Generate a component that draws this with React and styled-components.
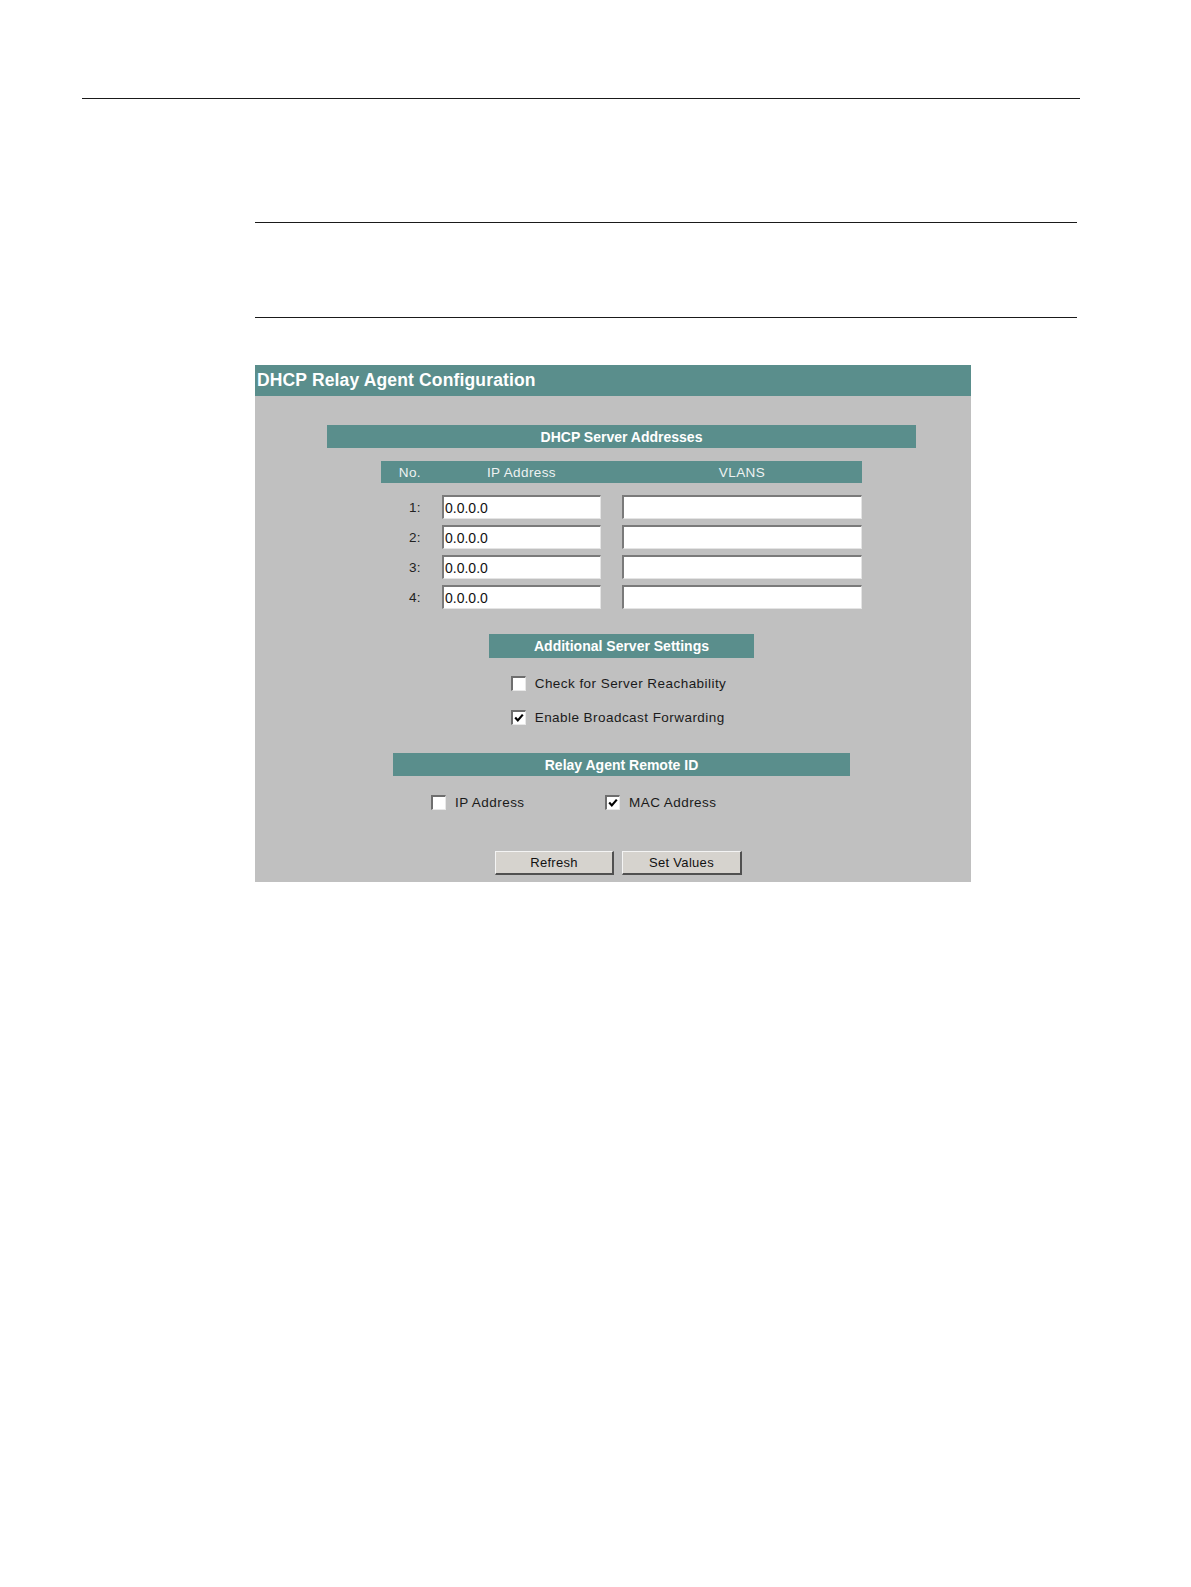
import React from "react";
import styled, { createGlobalStyle } from "styled-components";

const Global = createGlobalStyle`
  html, body { margin: 0; padding: 0; background: #ffffff; }
  body { font-family: "Liberation Sans", Arial, sans-serif; }
`;

const TEAL = "#5a8e8c";
const GRAY = "#c0c0c0";

const Page = styled.div`
  width: 1191px;
  min-height: 1587px;
  padding-top: 98px;
  box-sizing: border-box;
  background: #fff;
`;

const Rule = styled.div`
  height: 1px;
  background: #1a1a1a;
  margin-left: ${(p) => p.$left}px;
  width: ${(p) => p.$width}px;
  margin-top: ${(p) => p.$top || 0}px;
`;

const Content = styled.div`
  margin-left: 255px;
  width: 822px;
  display: flex;
  flex-direction: column;
`;

const Panel = styled.div`
  margin-top: 47px;
  width: 716px;
  background: ${GRAY};
  display: flex;
  flex-direction: column;
`;

const TitleBar = styled.div`
  height: 31px;
  background: ${TEAL};
  color: #fff;
  font-weight: bold;
  font-size: 17.5px;
  letter-spacing: 0.15px;
  display: flex;
  align-items: center;
  padding-left: 2px;
  padding-bottom: 1px;
  box-sizing: border-box;
`;

const Body = styled.div`
  display: flex;
  flex-direction: column;
  align-items: center;
  padding: 29px 0 7px 17px;
`;

const SectionBar = styled.div`
  width: ${(p) => p.$width}px;
  height: ${(p) => p.$height || 23}px;
  margin-top: ${(p) => p.$top || 0}px;
  background: ${TEAL};
  color: #fff;
  font-weight: bold;
  font-size: 14px;
  display: flex;
  align-items: center;
  justify-content: center;
`;

const Grid = styled.div`
  display: grid;
  grid-template-columns: 40px 159px 240px;
  column-gap: 21px;
  width: 481px;
  align-items: center;
`;

const HeaderGrid = styled(Grid)`
  margin-top: 13px;
  height: 22px;
  background: ${TEAL};
  color: #eef2f2;
  font-size: 13.5px;
  letter-spacing: 0.4px;
`;

const HeadCell = styled.div`
  text-align: ${(p) => (p.$right ? "right" : "center")};
`;

const Rows = styled(Grid)`
  margin-top: 12px;
  row-gap: 6px;
`;

const RowLabel = styled.div`
  text-align: right;
  font-size: 13.5px;
  letter-spacing: 0.4px;
  color: #222;
`;

const TextBox = styled.input`
  box-sizing: border-box;
  height: 24px;
  width: 100%;
  margin: 0;
  padding: 0 0 0 1px;
  background: #fff;
  border-style: solid;
  border-width: 2px 1px 1px 2px;
  border-color: #7a7a7a #e4e4e4 #e4e4e4 #7a7a7a;
  font-family: "Liberation Sans", Arial, sans-serif;
  font-size: 14px;
  color: #111;
  outline: none;
`;

const CheckGroup = styled.div`
  display: flex;
  flex-direction: column;
  align-items: flex-start;
  gap: 20px;
  margin-top: 18px;
  margin-right: 6px;
`;

const CheckItem = styled.label`
  display: flex;
  align-items: center;
  gap: 9px;
  font-size: 13.5px;
  letter-spacing: 0.45px;
  color: #1a1a1a;
  height: 14px;
`;

const Box = styled.span`
  box-sizing: border-box;
  width: 15px;
  height: 15px;
  background: #fff;
  border-style: solid;
  border-width: 2px 1px 1px 2px;
  border-color: #6e6e6e #e8e8e8 #e8e8e8 #6e6e6e;
  display: flex;
  align-items: center;
  justify-content: center;
  flex-shrink: 0;
`;

const RemoteRow = styled.div`
  width: 457px;
  box-sizing: border-box;
  padding-left: 38px;
  margin-top: 19px;
  display: grid;
  grid-template-columns: 174px auto;
`;

const ButtonRow = styled.div`
  display: flex;
  gap: 8px;
  margin-top: 42px;
  padding-right: 6px;
`;

const Button = styled.button`
  box-sizing: border-box;
  width: ${(p) => p.$width}px;
  height: 24px;
  margin: 0;
  padding: 0;
  background: #d6d3ce;
  border-style: solid;
  border-width: 1px 2px 2px 1px;
  border-color: #f4f4f4 #505050 #505050 #f4f4f4;
  font-family: "Liberation Sans", Arial, sans-serif;
  font-size: 13px;
  letter-spacing: 0.3px;
  color: #111;
`;

const Check = ({ checked }) => (
  <Box>
    {checked && (
      <svg width="10" height="10" viewBox="0 0 10 10">
        <path d="M1.2 4.6 L3.8 7.4 L8.8 1.6" fill="none" stroke="#000" strokeWidth="2.2" />
      </svg>
    )}
  </Box>
);

const rows = [1, 2, 3, 4];

export default function App() {
  return (
    <Page>
      <Global />
      <Rule $left={82} $width={998} />
      <Content>
        <Rule $left={0} $width={822} $top={123} />
        <Rule $left={0} $width={822} $top={94} />
        <Panel>
          <TitleBar>DHCP Relay Agent Configuration</TitleBar>
          <Body>
            <SectionBar $width={589}>DHCP Server Addresses</SectionBar>
            <HeaderGrid>
              <HeadCell $right>No.</HeadCell>
              <HeadCell>IP Address</HeadCell>
              <HeadCell>VLANS</HeadCell>
            </HeaderGrid>
            <Rows>
              {rows.map((n) => (
                <React.Fragment key={n}>
                  <RowLabel>{n}:</RowLabel>
                  <TextBox defaultValue="0.0.0.0" />
                  <TextBox defaultValue="" />
                </React.Fragment>
              ))}
            </Rows>
            <SectionBar $width={265} $height={24} $top={25}>
              Additional Server Settings
            </SectionBar>
            <CheckGroup>
              <CheckItem>
                <Check />
                Check for Server Reachability
              </CheckItem>
              <CheckItem>
                <Check checked />
                Enable Broadcast Forwarding
              </CheckItem>
            </CheckGroup>
            <SectionBar $width={457} $top={29}>
              Relay Agent Remote ID
            </SectionBar>
            <RemoteRow>
              <CheckItem>
                <Check />
                IP Address
              </CheckItem>
              <CheckItem>
                <Check checked />
                MAC Address
              </CheckItem>
            </RemoteRow>
            <ButtonRow>
              <Button $width={119}>Refresh</Button>
              <Button $width={120}>Set Values</Button>
            </ButtonRow>
          </Body>
        </Panel>
      </Content>
    </Page>
  );
}
